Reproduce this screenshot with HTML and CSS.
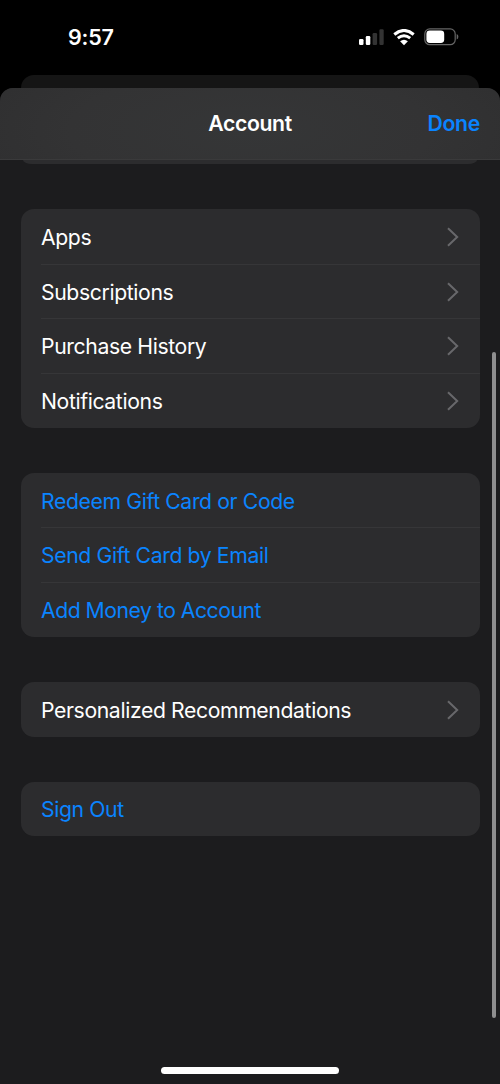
FILE: index.html
```html
<!DOCTYPE html>
<html lang="en">
<head>
<meta charset="utf-8">
<title>Account</title>
<link rel="stylesheet" href="styles.css">
</head>
<body>
<svg class="symbols" aria-hidden="true">
  <symbol id="chevron" viewBox="0 0 12 20"><path d="M1 1.2L10.2 10L1 18.8"/></symbol>
</svg>
<div class="screen">
  <div class="status">
    <span class="time">9:57</span>
    <div class="indicators">
      <svg class="signal" width="25" height="17" viewBox="0 0 25 17">
        <rect x="0" y="10" width="4.5" height="6" rx="1.2" fill="#fff"/>
        <rect x="6.8" y="7" width="4.5" height="9" rx="1.2" fill="#fff"/>
        <rect x="13.6" y="4" width="4.5" height="12" rx="1.2" fill="#333"/>
        <rect x="20.4" y="0.3" width="4.3" height="15.7" rx="1.2" fill="#333"/>
      </svg>
      <svg class="wifi" width="22" height="17" viewBox="0 0 22 17">
        <g fill="none" stroke="#fff">
          <path d="M1.3 5.5Q11 -2.6 20.7 5.5" stroke-width="3"/>
          <path d="M4.8 9.2Q11 4.2 17.2 9.2" stroke-width="2.9"/>
        </g>
        <path d="M7.1 12.2Q11 9.2 14.9 12.2L11 16.2Z" fill="#fff"/>
      </svg>
      <svg class="battery" width="35" height="18" viewBox="0 0 35 18">
        <rect x="0.8" y="0.9" width="30.4" height="15.8" rx="5" fill="none" stroke="#666" stroke-width="1.2"/>
        <rect x="2.4" y="2.6" width="17.8" height="12.4" rx="3.4" fill="#fff"/>
        <path d="M32.7 6.1Q34.4 6.8 34.4 8.8Q34.4 10.8 32.7 11.5Z" fill="#666"/>
      </svg>
    </div>
  </div>
  <main class="sheet">
    <header class="bar"><span></span><h1>Account</h1><a class="done">Done</a></header>
    <div class="peek"></div>
    <div class="groups">
      <section class="group">
        <div class="row"><span>Apps</span><svg class="chev"><use href="#chevron"/></svg></div>
        <div class="row"><span>Subscriptions</span><svg class="chev"><use href="#chevron"/></svg></div>
        <div class="row"><span>Purchase History</span><svg class="chev"><use href="#chevron"/></svg></div>
        <div class="row"><span>Notifications</span><svg class="chev"><use href="#chevron"/></svg></div>
      </section>
      <section class="group link">
        <div class="row"><span>Redeem Gift Card or Code</span></div>
        <div class="row"><span>Send Gift Card by Email</span></div>
        <div class="row tight"><span>Add Money to Account</span></div>
      </section>
      <section class="group">
        <div class="row"><span>Personalized Recommendations</span><svg class="chev"><use href="#chevron"/></svg></div>
      </section>
      <section class="group link">
        <div class="row"><span>Sign Out</span></div>
      </section>
    </div>
  </main>
  <div class="scrollbar"></div>
  <div class="home"></div>
</div>
</body>
</html>
```

FILE: styles.css
```css
* { box-sizing: border-box; }
body {
  margin: 0;
  background: #000;
  color: #fff;
  font-family: Inter, "Liberation Sans", sans-serif;
}
.symbols { position: absolute; width: 0; height: 0; }
.screen {
  position: relative;
  width: 500px;
  height: 1084px;
  overflow: hidden;
  background: #000;
}
.status {
  position: relative;
  display: flex;
  justify-content: space-between;
  align-items: flex-start;
  height: 88px;
  padding: 24px 41px 0 68px;
}
/* Edge of the sheet stacked behind the current one */
.status::after {
  content: "";
  position: absolute;
  left: 21px;
  right: 21px;
  top: 75px;
  height: 30px;
  border-radius: 13px 13px 0 0;
  background: #151515;
}
.time { font-size: 21.5px; line-height: 27px; font-weight: 600; letter-spacing: -0.2px; }
.indicators { display: flex; align-items: flex-start; padding-top: 4px; }
.signal { margin: 1px 9px 0 0; }
.wifi { margin: 1px 9px 0 0; }
.sheet {
  position: relative;
  height: 996px;
  border-radius: 13px 13px 0 0;
  overflow: hidden;
  background: #1c1c1e;
}
.bar {
  display: grid;
  grid-template-columns: 1fr auto 1fr;
  align-items: center;
  height: 72px;
  padding: 0 20px 2px 20px;
  border-bottom: 1px solid #3a3a3b;
  background: radial-gradient(ellipse 300px 100px at 50% 60%, #353637, #333334 60%, #2f2f30);
}
.bar h1 { margin: 0; font-size: 21.2px; font-weight: 600; letter-spacing: -0.35px; }
.done { justify-self: end; color: #0a84ff; font-size: 21.2px; font-weight: 600; letter-spacing: -0.3px; }
.peek {
  height: 4px;
  margin: 0 23px;
  border-radius: 0 0 9px 9px / 0 0 4px 4px;
  background: #2c2c2e;
}
.groups { display: flex; flex-direction: column; gap: 45px; padding: 45px 20.5px 0; }
.group { border-radius: 13px; background: #2c2c2e; }
.row {
  display: flex;
  align-items: center;
  justify-content: space-between;
  height: 54.7px;
  margin-left: 20.5px;
  padding: 1px 21px 0 0;
  font-size: 21.2px;
  letter-spacing: -0.38px;
  white-space: nowrap;
}
.row + .row { box-shadow: inset 0 1px 0 #363638; }
.tight { letter-spacing: -0.48px; }
.link { color: #0a84ff; }
.chev {
  width: 12px;
  height: 20px;
  fill: none;
  stroke: #68686b;
  stroke-width: 2;
}
.scrollbar {
  position: absolute;
  left: 492px;
  top: 352px;
  width: 4px;
  height: 666px;
  border-radius: 2px;
  background: #8e8e8f;
}
.home {
  position: absolute;
  left: 161px;
  top: 1067px;
  width: 178px;
  height: 7px;
  border-radius: 4px;
  background: #fff;
}
```
